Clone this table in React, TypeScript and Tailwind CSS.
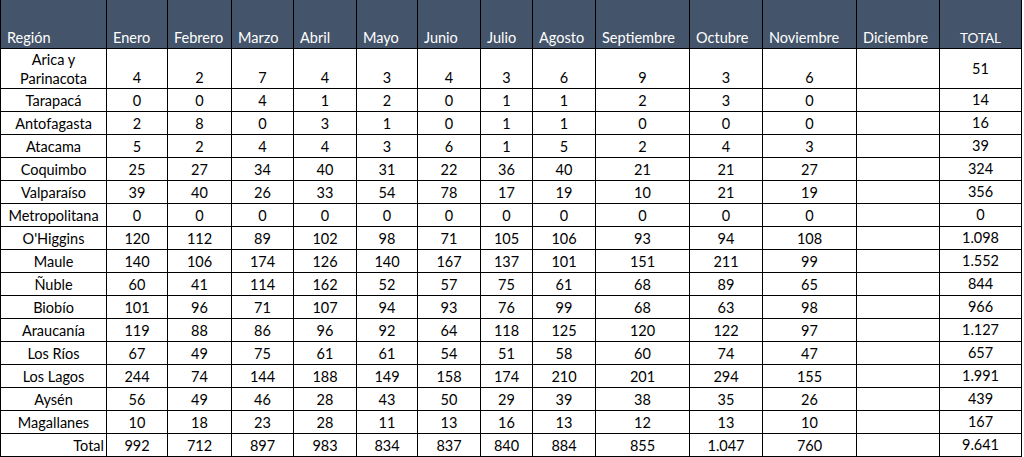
import React from "react";

const cols = [106, 61, 64, 62, 63, 61, 63, 52, 63, 94, 73, 94, 83, 82];
const heads = ["Región", "Enero", "Febrero", "Marzo", "Abril", "Mayo", "Junio", "Julio", "Agosto", "Septiembre", "Octubre", "Noviembre", "Diciembre"];

type Row = [string, string[], string];
const rows: Row[] = [
  ["Tarapacá", "0 0 4 1 2 0 1 1 2 3 0".split(" "), "14"],
  ["Antofagasta", "2 8 0 3 1 0 1 1 0 0 0".split(" "), "16"],
  ["Atacama", "5 2 4 4 3 6 1 5 2 4 3".split(" "), "39"],
  ["Coquimbo", "25 27 34 40 31 22 36 40 21 21 27".split(" "), "324"],
  ["Valparaíso", "39 40 26 33 54 78 17 19 10 21 19".split(" "), "356"],
  ["Metropolitana", "0 0 0 0 0 0 0 0 0 0 0".split(" "), "0"],
  ["O'Higgins", "120 112 89 102 98 71 105 106 93 94 108".split(" "), "1.098"],
  ["Maule", "140 106 174 126 140 167 137 101 151 211 99".split(" "), "1.552"],
  ["Ñuble", "60 41 114 162 52 57 75 61 68 89 65".split(" "), "844"],
  ["Biobío", "101 96 71 107 94 93 76 99 68 63 98".split(" "), "966"],
  ["Araucanía", "119 88 86 96 92 64 118 125 120 122 97".split(" "), "1.127"],
  ["Los Ríos", "67 49 75 61 61 54 51 58 60 74 47".split(" "), "657"],
  ["Los Lagos", "244 74 144 188 149 158 174 210 201 294 155".split(" "), "1.991"],
  ["Aysén", "56 49 46 28 43 50 29 39 38 35 26".split(" "), "439"],
  ["Magallanes", "10 18 23 28 11 13 16 13 12 13 10".split(" "), "167"],
  ["Total", "992 712 897 983 834 837 840 884 855 1.047 760".split(" "), "9.641"],
];

const arica = "4 2 7 4 3 4 3 6 9 3 6".split(" ");

export default function App() {
  const gridStyle = { gridTemplateColumns: cols.map((c) => c + "px").join(" ") };
  return (
    <div
      className="w-[1024px] h-[457px] bg-white overflow-hidden text-[14.5px] text-black"
      style={{ fontFamily: "Lato, 'Liberation Sans', sans-serif" }}
    >
      <div className="grid w-[1022px] border-l border-black" style={gridStyle}>
        {heads.map((h) => (
          <div
            key={h}
            className="h-[49px] bg-[#44546a] text-white border-r border-b border-black flex items-end pl-[6px] pb-[1px] leading-[18px] whitespace-nowrap"
          >
            {h}
          </div>
        ))}
        <div className="h-[49px] bg-[#44546a] text-white border-r border-b border-black flex items-end justify-center pb-[1px] leading-[18px] text-[13.5px]">
          TOTAL
        </div>

        <div className="h-[40px] border-r border-b border-black flex flex-col items-center justify-center leading-[19px]">
          <span>Arica y</span>
          <span>Parinacota</span>
        </div>
        {arica.map((v, i) => (
          <div key={i} className="h-[40px] border-r border-b border-black flex items-end justify-center pb-[1px] leading-[18px]">
            {v}
          </div>
        ))}
        <div className="h-[40px] border-r border-b border-black" />
        <div className="h-[40px] border-r border-b border-black flex items-center justify-center leading-[18px]">
          51
        </div>

        {rows.map(([name, vals, tot]) => (
          <React.Fragment key={name}>
            <div
              className={
                "h-[23px] border-r border-b border-black flex items-end pb-[1px] leading-[18px] whitespace-nowrap " +
                (name === "Total" ? "justify-end pr-[2px]" : "justify-center")
              }
            >
              {name}
            </div>
            {vals.map((v, i) => (
              <div key={i} className="h-[23px] border-r border-b border-black flex items-end justify-center pb-[1px] leading-[18px]">
                {v}
              </div>
            ))}
            <div className="h-[23px] border-r border-b border-black" />
            <div className="h-[23px] border-r border-b border-black flex items-center justify-center leading-[18px]">
              {tot}
            </div>
          </React.Fragment>
        ))}
      </div>
    </div>
  );
}
